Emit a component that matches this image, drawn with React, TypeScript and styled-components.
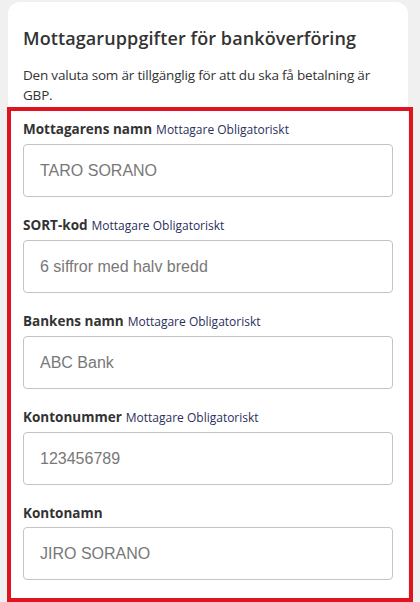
import React from "react";
import styled, { createGlobalStyle } from "styled-components";

const GlobalStyle = createGlobalStyle`
  html, body {
    margin: 0;
    padding: 0;
    background: #f0f0f0;
  }
  body {
    font-family: "Open Sans", "Noto Sans", sans-serif;
  }
`;

const Page = styled.div`
  padding: 2px 12px 0 8px;
  height: 602px;
  box-sizing: border-box;
  overflow: hidden;
`;

const Card = styled.section`
  position: relative;
  background: #ffffff;
  border-radius: 12px;
  padding: 24px 15px 20px 15px;
  min-height: 620px;
`;

const Title = styled.h2`
  margin: 0;
  font-size: 18px;
  line-height: 24px;
  font-weight: 600;
  color: #333333;
  letter-spacing: 0.1px;
`;

const Description = styled.p`
  margin: 15px 0 0;
  font-size: 13.5px;
  letter-spacing: -0.2px;
  line-height: 20px;
  color: #333333;
`;

const Fields = styled.div`
  display: flex;
  flex-direction: column;
  gap: 18px;
  margin-top: 14px;
`;

const Field = styled.label`
  display: flex;
  flex-direction: column;
  gap: 4px;
`;

const LabelRow = styled.div`
  display: flex;
  align-items: baseline;
  gap: 4px;
  line-height: 20px;
`;

const LabelText = styled.span`
  font-size: 13.5px;
  font-weight: 700;
  color: #333333;
`;

const Required = styled.span`
  font-size: 12px;
  color: #2a2f5c;
`;

const Input = styled.input`
  box-sizing: border-box;
  width: 100%;
  height: 53px;
  padding: 0 16px;
  border: 1px solid #c4c4c4;
  border-radius: 4px;
  font-family: "Liberation Sans", Arial, sans-serif;
  font-size: 16px;
  color: #333333;
  background: #ffffff;
  outline: none;

  &::placeholder {
    color: #787878;
  }
`;

const Highlight = styled.div`
  position: absolute;
  left: -1px;
  right: -5px;
  top: 105px;
  height: 487px;
  border: 4px solid #e0141e;
  pointer-events: none;
`;

type FieldDef = { label: string; placeholder: string; required: boolean };

const fields: FieldDef[] = [
  { label: "Mottagarens namn", placeholder: "TARO SORANO", required: true },
  { label: "SORT-kod", placeholder: "6 siffror med halv bredd", required: true },
  { label: "Bankens namn", placeholder: "ABC Bank", required: true },
  { label: "Kontonummer", placeholder: "123456789", required: true },
  { label: "Kontonamn", placeholder: "JIRO SORANO", required: false },
];

export default function App() {
  return (
    <>
      <GlobalStyle />
      <Page>
        <Card>
          <Title>Mottagaruppgifter för banköverföring</Title>
          <Description>
            Den valuta som är tillgänglig för att du ska få betalning är GBP.
          </Description>
          <Fields>
            {fields.map((f) => (
              <Field key={f.label}>
                <LabelRow>
                  <LabelText>{f.label}</LabelText>
                  {f.required && <Required>Mottagare Obligatoriskt</Required>}
                </LabelRow>
                <Input placeholder={f.placeholder} />
              </Field>
            ))}
          </Fields>
          <Highlight />
        </Card>
      </Page>
    </>
  );
}
